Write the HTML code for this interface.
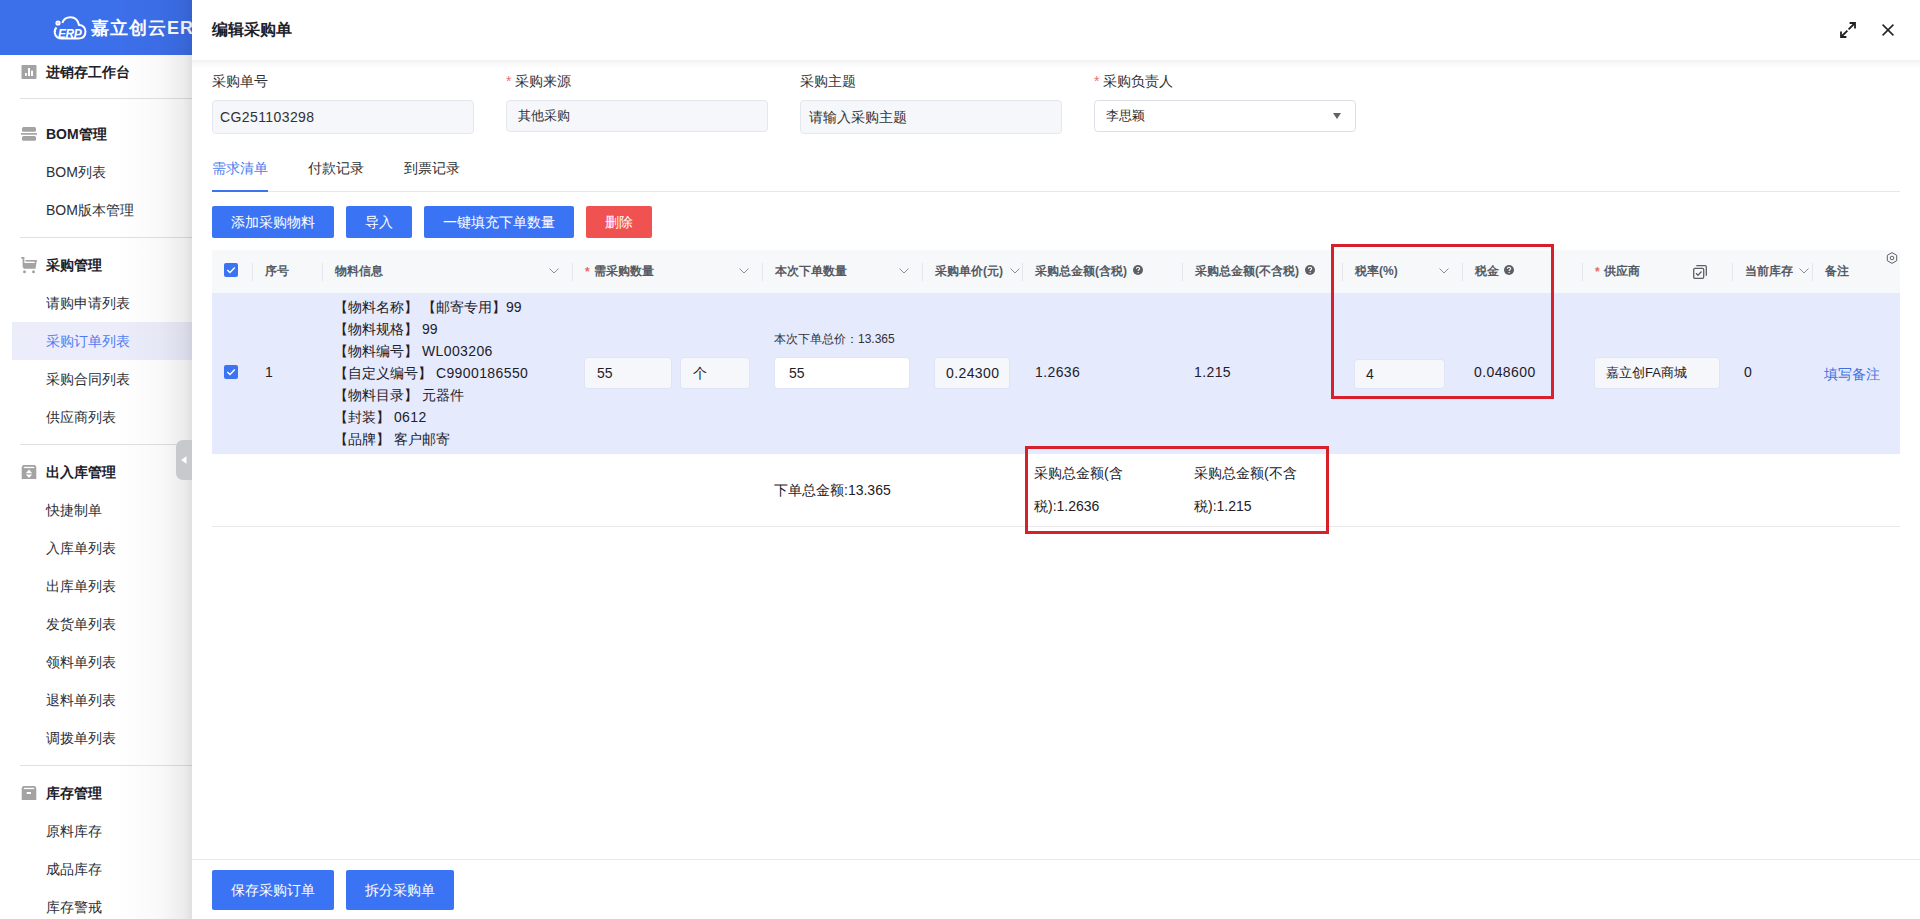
<!DOCTYPE html>
<html><head><meta charset="utf-8">
<style>
*{box-sizing:border-box;margin:0;padding:0}
html,body{width:1920px;height:919px;overflow:hidden;background:#fff;font-family:"Liberation Sans",sans-serif;color:#1d2129}
.a{position:absolute;white-space:nowrap}
#side{position:absolute;left:0;top:0;width:192px;height:919px;background:#fff;overflow:hidden}
#logo{position:absolute;left:0;top:0;width:192px;height:55px;background:#3c6fea}
#shade{position:absolute;left:0;top:0;width:192px;height:919px;background:linear-gradient(to right,rgba(0,0,0,0) 0,rgba(0,0,0,0) 115px,rgba(0,0,0,.025) 160px,rgba(0,0,0,.07) 183px,rgba(0,0,0,.12) 192px)}
.sh{font-size:14px;font-weight:bold;color:#1d2129;line-height:20px;left:46px}
.si{font-size:14px;color:#2b2f36;line-height:20px;left:46px}
.dv{position:absolute;left:20px;width:172px;height:1px;background:#e0e0e0}
.ic{position:absolute;left:21px}
#drawer{position:absolute;left:192px;top:0;width:1728px;height:919px;background:#fff}
.lbl{font-size:14px;color:#303133;line-height:20px}
.req{color:#f56c6c;font-size:14px;margin-right:4px}
.inp{position:absolute;height:33px;width:262px;top:100px;background:#f5f7fa;border:1px solid #e4e7ed;border-radius:4px;font-size:14px;color:#303133;line-height:31px;padding-left:8px}
.btn{position:absolute;top:206px;height:32px;background:#3a74f5;color:#fff;font-size:14px;line-height:32px;text-align:center;border-radius:2px}
.th{font-size:12px;font-weight:bold;color:#555a62;line-height:16px;top:263px}
.sep{position:absolute;top:263px;width:1px;height:18px;background:#e5e6eb}
.chev{position:absolute;top:268px;width:10px;height:6px}
.n{letter-spacing:.4px}
.cell{font-size:14px;color:#1d2129;line-height:20px}
.ci{position:absolute;height:30px;top:358px;background:#f5f7fa;border-radius:3px;box-shadow:0 0 0 1px rgba(0,0,0,.025);font-size:14px;line-height:30px;padding-left:12px;color:#1d2129}
</style></head><body>
<div id="side">
  <div id="logo">
    <svg class="a" style="left:53px;top:16px" width="34" height="24" viewBox="0 0 34 24" fill="none" stroke="#fff" stroke-width="2">
      <circle cx="5" cy="7" r="1.6"/>
      <path d="M3.5 11.5 C2 13 1.5 15 1.8 17 C2.5 21 5.5 22.5 9 22.5 L25 22.5 C30 22.5 32.5 19.5 32.5 15.5 C32.5 11.5 29.5 9 26 9 C25 4 21.5 1.3 17.5 1.3 C13.5 1.3 10.5 3.5 9.3 6.8"/>
      <text x="5" y="21.5" font-family="Liberation Sans" font-size="12" font-weight="bold" font-style="italic" fill="#fff" stroke="none" letter-spacing="-0.5">ERP</text>
    </svg>
    <div class="a" style="left:91px;top:15px;font-size:18px;font-weight:bold;color:#fff;line-height:26px;letter-spacing:1px">嘉立创云ERP</div>
  </div>
  <div style="position:absolute;left:12px;top:322px;width:180px;height:38px;background:#ebedfb"></div>
  <div class="a sh" style="top:62px">进销存工作台</div>
  <div class="a sh" style="top:124px">BOM管理</div>
  <div class="a si" style="top:162px">BOM列表</div>
  <div class="a si" style="top:200px">BOM版本管理</div>
  <div class="a sh" style="top:255px">采购管理</div>
  <div class="a si" style="top:293px">请购申请列表</div>
  <div class="a si" style="top:331px;color:#4f7cf0">采购订单列表</div>
  <div class="a si" style="top:369px">采购合同列表</div>
  <div class="a si" style="top:407px">供应商列表</div>
  <div class="a sh" style="top:461.5px">出入库管理</div>
  <div class="a si" style="top:500px">快捷制单</div>
  <div class="a si" style="top:538px">入库单列表</div>
  <div class="a si" style="top:576px">出库单列表</div>
  <div class="a si" style="top:614px">发货单列表</div>
  <div class="a si" style="top:652px">领料单列表</div>
  <div class="a si" style="top:690px">退料单列表</div>
  <div class="a si" style="top:728px">调拨单列表</div>
  <div class="a sh" style="top:783px">库存管理</div>
  <div class="a si" style="top:821px">原料库存</div>
  <div class="a si" style="top:859px">成品库存</div>
  <div class="a si" style="top:897px">库存警戒</div>
  <div class="dv" style="top:98px"></div>
  <div class="dv" style="top:237px"></div>
  <div class="dv" style="top:444px"></div>
  <div class="dv" style="top:765px"></div>
  <!-- icons -->
  <svg class="a" style="left:21px;top:65px" width="16" height="14" viewBox="0 0 16 14"><rect x="0.5" y="0" width="15" height="14" rx="1" fill="#a3a3a3"/><rect x="4" y="8" width="1.8" height="3" fill="#fff"/><rect x="7" y="3" width="2" height="8" fill="#fff"/><rect x="10" y="5.7" width="2" height="5.3" fill="#fff"/></svg>
  <svg class="a" style="left:21px;top:127px" width="16" height="14" viewBox="0 0 16 14"><rect x="1" y="0" width="14" height="4.8" rx="1.5" fill="#a3a3a3"/><rect x="0" y="6" width="16" height="1.8" fill="#a8a8a8"/><rect x="1" y="9" width="14" height="4.8" rx="1.5" fill="#a3a3a3"/></svg>
  <svg class="a" style="left:20px;top:256px" width="18" height="18" viewBox="0 0 18 18"><path d="M1.2 1.8 H3.5 V11.5" stroke="#a3a3a3" stroke-width="1.8" fill="none"/><path d="M5.8 4.4 H16.8 L15.5 12.8 H3.5 V7 H14.7 L15 5.4" fill="#a3a3a3"/><rect x="5.5" y="4" width="11.3" height="1.6" fill="#a3a3a3"/><circle cx="4.5" cy="15.8" r="1.5" fill="#a3a3a3"/><circle cx="13.5" cy="15.8" r="1.5" fill="#a3a3a3"/></svg>
  <svg class="a" style="left:21px;top:465px" width="16" height="14" viewBox="0 0 16 14"><path d="M2 0 H14 L15.3 2 V14 H0.7 V2 Z" fill="#a3a3a3"/><rect x="2.8" y="1.8" width="10.4" height="1.3" fill="#fff"/><path d="M8 4.6 L11.2 8.3 H4.8 Z M4.8 9.5 H11.2 L8 13 Z" fill="#fff"/></svg>
  <svg class="a" style="left:21px;top:786px" width="16" height="14" viewBox="0 0 16 14"><path d="M2 0 H14 L15.3 2 V14 H0.7 V2 Z" fill="#a3a3a3"/><rect x="2.8" y="1.8" width="10.4" height="1.3" fill="#fff"/><rect x="5.7" y="6" width="4.3" height="2" fill="#fff"/></svg>
  <div id="shade"></div>
  <div class="a" style="left:176px;top:440px;width:16px;height:40px;background:#c7c9cc;border-radius:7px 0 0 7px"></div>
  <svg class="a" style="left:180px;top:455px" width="8" height="10" viewBox="0 0 8 10"><path d="M1 5 L6.5 1.2 V8.8 Z" fill="#fff"/></svg>
</div>
<div id="drawer"></div>
<!-- header -->
<div class="a" style="left:212px;top:19px;font-size:16px;font-weight:bold;color:#1d2129;line-height:22px">编辑采购单</div>
<div class="a" style="left:192px;top:60px;width:1728px;height:8px;background:linear-gradient(to bottom,rgba(0,0,0,.05),rgba(0,0,0,.02) 60%,rgba(0,0,0,0))"></div>
<svg class="a" style="left:1840px;top:22px" width="16" height="16" viewBox="0 0 16 16" fill="none" stroke="#222" stroke-width="1.8"><path d="M9.6 1 H15 V6.4 M15 1 L8.6 7.4 M1 9.6 V15 H6.4 M1 15 L7.4 8.6"/></svg>
<svg class="a" style="left:1882px;top:24px" width="12" height="12" viewBox="0 0 12 12" fill="none" stroke="#222" stroke-width="1.5"><path d="M0.6 0.6 L11.4 11.4 M11.4 0.6 L0.6 11.4"/></svg>
<!-- form -->
<div class="a lbl" style="left:212px;top:71px">采购单号</div>
<div class="a lbl" style="left:506px;top:71px"><span class="req">*</span>采购来源</div>
<div class="a lbl" style="left:800px;top:71px">采购主题</div>
<div class="a lbl" style="left:1094px;top:71px"><span class="req">*</span>采购负责人</div>
<div class="inp" style="left:212px;height:34px;line-height:32px;padding-left:7px"><span class="n">CG251103298</span></div>
<div class="inp" style="left:506px;height:32px;line-height:30px;font-size:13px;padding-left:11px">其他采购</div>
<div class="inp" style="left:800px;height:34px;line-height:32px;font-size:14px;padding-left:8px">请输入采购主题</div>
<div class="inp" style="left:1094px;height:32px;line-height:30px;background:#fff;border-color:#dcdfe6;font-size:13px;padding-left:11px">李思颖</div>
<svg class="a" style="left:1333px;top:113px" width="8" height="6" viewBox="0 0 8 6"><path d="M0 0 H8 L4 6 Z" fill="#606266"/></svg>
<!-- tabs -->
<div class="a" style="left:212px;top:158px;font-size:14px;line-height:20px;color:#4a7cf0">需求清单</div>
<div class="a" style="left:308px;top:158px;font-size:14px;line-height:20px;color:#303133">付款记录</div>
<div class="a" style="left:404px;top:158px;font-size:14px;line-height:20px;color:#303133">到票记录</div>
<div class="a" style="left:212px;top:191px;width:1688px;height:1px;background:#e4e7ed"></div>
<div class="a" style="left:212px;top:190px;width:56px;height:2px;background:#3d73ee"></div>
<!-- buttons -->
<div class="btn" style="left:212px;width:122px">添加采购物料</div>
<div class="btn" style="left:346px;width:66px">导入</div>
<div class="btn" style="left:424px;width:150px">一键填充下单数量</div>
<div class="btn" style="left:586px;width:66px;background:#f05252">删除</div>
<!-- table -->
<div class="a" style="left:212px;top:250px;width:1688px;height:43px;background:#f7f8fa"></div>
<div class="a" style="left:212px;top:293px;width:1688px;height:161px;background:#e6eafd"></div>
<div class="a" style="left:212px;top:526px;width:1688px;height:1px;background:#e9e9ec"></div>
<!-- table header -->
<svg class="a" style="left:224px;top:263px" width="14" height="14" viewBox="0 0 14 14"><rect width="14" height="14" rx="2" fill="#3a74f5"/><path d="M3.3 7 L6 9.6 L10.8 4.6" stroke="#fff" stroke-width="1.4" fill="none"/></svg>
<div class="sep" style="left:252px"></div>
<div class="sep" style="left:322px"></div>
<div class="sep" style="left:572px"></div>
<div class="sep" style="left:762px"></div>
<div class="sep" style="left:922px"></div>
<div class="sep" style="left:1022px"></div>
<div class="sep" style="left:1182px"></div>
<div class="sep" style="left:1342px"></div>
<div class="sep" style="left:1462px"></div>
<div class="sep" style="left:1582px"></div>
<div class="sep" style="left:1732px"></div>
<div class="sep" style="left:1812px"></div>
<div class="a th" style="left:265px">序号</div>
<div class="a th" style="left:335px">物料信息</div>
<div class="a th" style="left:585px"><span style="color:#f26464;margin-right:4px;position:relative;top:1px">*</span>需采购数量</div>
<div class="a th" style="left:775px">本次下单数量</div>
<div class="a th" style="left:935px">采购单价(元)</div>
<div class="a th" style="left:1035px">采购总金额(含税)</div>
<div class="a th" style="left:1195px">采购总金额(不含税)</div>
<div class="a th" style="left:1355px">税率(%)</div>
<div class="a th" style="left:1475px">税金</div>
<div class="a th" style="left:1595px"><span style="color:#f26464;margin-right:4px;position:relative;top:1px">*</span>供应商</div>
<div class="a th" style="left:1745px">当前库存</div>
<div class="a th" style="left:1825px">备注</div>
<svg class="chev" style="left:549px" viewBox="0 0 10 6"><path d="M0.5 0.5 L5 5 L9.5 0.5" stroke="#86909c" stroke-width="1" fill="none"/></svg>
<svg class="chev" style="left:739px" viewBox="0 0 10 6"><path d="M0.5 0.5 L5 5 L9.5 0.5" stroke="#86909c" stroke-width="1" fill="none"/></svg>
<svg class="chev" style="left:899px" viewBox="0 0 10 6"><path d="M0.5 0.5 L5 5 L9.5 0.5" stroke="#86909c" stroke-width="1" fill="none"/></svg>
<svg class="chev" style="left:1010px" viewBox="0 0 10 6"><path d="M0.5 0.5 L5 5 L9.5 0.5" stroke="#86909c" stroke-width="1" fill="none"/></svg>
<svg class="chev" style="left:1439px" viewBox="0 0 10 6"><path d="M0.5 0.5 L5 5 L9.5 0.5" stroke="#86909c" stroke-width="1" fill="none"/></svg>
<svg class="chev" style="left:1799px" viewBox="0 0 10 6"><path d="M0.5 0.5 L5 5 L9.5 0.5" stroke="#86909c" stroke-width="1" fill="none"/></svg>
<svg class="a" style="left:1133px;top:265px" width="10" height="10" viewBox="0 0 10 10"><circle cx="5" cy="5" r="5" fill="#5c6066"/><path d="M3.4 3.8 C3.4 2.8 4.1 2.3 5 2.3 C5.9 2.3 6.6 2.9 6.6 3.7 C6.6 4.6 5.5 4.8 5.2 5.5 V6" stroke="#fff" stroke-width="1.1" fill="none"/><circle cx="5.1" cy="7.6" r="0.7" fill="#fff"/></svg>
<svg class="a" style="left:1305px;top:265px" width="10" height="10" viewBox="0 0 10 10"><circle cx="5" cy="5" r="5" fill="#5c6066"/><path d="M3.4 3.8 C3.4 2.8 4.1 2.3 5 2.3 C5.9 2.3 6.6 2.9 6.6 3.7 C6.6 4.6 5.5 4.8 5.2 5.5 V6" stroke="#fff" stroke-width="1.1" fill="none"/><circle cx="5.1" cy="7.6" r="0.7" fill="#fff"/></svg>
<svg class="a" style="left:1504px;top:265px" width="10" height="10" viewBox="0 0 10 10"><circle cx="5" cy="5" r="5" fill="#5c6066"/><path d="M3.4 3.8 C3.4 2.8 4.1 2.3 5 2.3 C5.9 2.3 6.6 2.9 6.6 3.7 C6.6 4.6 5.5 4.8 5.2 5.5 V6" stroke="#fff" stroke-width="1.1" fill="none"/><circle cx="5.1" cy="7.6" r="0.7" fill="#fff"/></svg>
<svg class="a" style="left:1693px;top:265px" width="14" height="14" viewBox="0 0 14 14" fill="none" stroke="#5c6066" stroke-width="1.3"><rect x="0.7" y="3.3" width="10" height="10" rx="1.2"/><path d="M3.3 0.7 H12.1 C12.8 0.7 13.3 1.2 13.3 1.9 V10.7"/><path d="M3 8.3 L5 10.3 L8.5 6.5"/></svg>
<svg class="a" style="left:1886px;top:252px" width="12" height="12" viewBox="0 0 12 12" fill="none" stroke="#5c6066" stroke-width="1"><path d="M6 0.6 L10.7 3.3 V8.7 L6 11.4 L1.3 8.7 V3.3 Z"/><circle cx="6" cy="6" r="1.8"/></svg>
<!-- row -->
<svg class="a" style="left:224px;top:365px" width="14" height="14" viewBox="0 0 14 14"><rect width="14" height="14" rx="2" fill="#3a74f5"/><path d="M3.3 7 L6 9.6 L10.8 4.6" stroke="#fff" stroke-width="1.4" fill="none"/></svg>
<div class="a cell" style="left:265px;top:362px">1</div>
<div class="a cell" style="left:334px;top:296px;line-height:22px;white-space:pre">【物料名称】 【邮寄专用】99
【物料规格】 99
【物料编号】 <span class="n">WL003206</span>
【自定义编号】 <span class="n">C9900186550</span>
【物料目录】 元器件
【封装】 <span class="n">0612</span>
【品牌】 客户邮寄</div>
<div class="ci" style="left:585px;width:86px">55</div>
<div class="ci" style="left:681px;width:68px">个</div>
<div class="a" style="left:774px;top:331px;font-size:12px;line-height:16px;color:#303133">本次下单总价：13.365</div>
<div class="ci" style="left:775px;width:134px;background:#fff;padding-left:14px">55</div>
<div class="ci" style="left:935px;width:74px;padding-left:11px" ><span class="n">0.24300</span></div>
<div class="a cell" style="left:1035px;top:362px"><span class="n">1.2636</span></div>
<div class="a cell" style="left:1194px;top:362px"><span class="n">1.215</span></div>
<div class="ci" style="left:1355px;width:89px;top:360px;height:28px;line-height:28px;padding-left:11px">4</div>
<div class="a cell" style="left:1474px;top:362px"><span class="n">0.048600</span></div>
<div class="ci" style="left:1595px;width:124px;font-size:13px;padding-left:11px">嘉立创FA商城</div>
<div class="a cell" style="left:1744px;top:362px">0</div>
<div class="a cell" style="left:1824px;top:364px;color:#3d70e0">填写备注</div>
<!-- summary -->
<div class="a cell" style="left:774px;top:480px">下单总金额:13.365</div>
<div class="a cell" style="left:1034px;top:463px">采购总金额(含</div>
<div class="a cell" style="left:1034px;top:496px">税):1.2636</div>
<div class="a cell" style="left:1194px;top:463px">采购总金额(不含</div>
<div class="a cell" style="left:1194px;top:496px">税):1.215</div>
<!-- red boxes -->
<div class="a" style="left:1331px;top:244px;width:223px;height:155px;border:3px solid #d7202b"></div>
<div class="a" style="left:1025px;top:446px;width:304px;height:88px;border:3px solid #d7202b"></div>
<!-- footer -->
<div class="a" style="left:192px;top:859px;width:1728px;height:1px;background:#e8e8e8"></div>
<div class="btn" style="left:212px;top:870px;height:40px;line-height:40px;width:122px">保存采购订单</div>
<div class="btn" style="left:346px;top:870px;height:40px;line-height:40px;width:108px">拆分采购单</div>
</body></html>
